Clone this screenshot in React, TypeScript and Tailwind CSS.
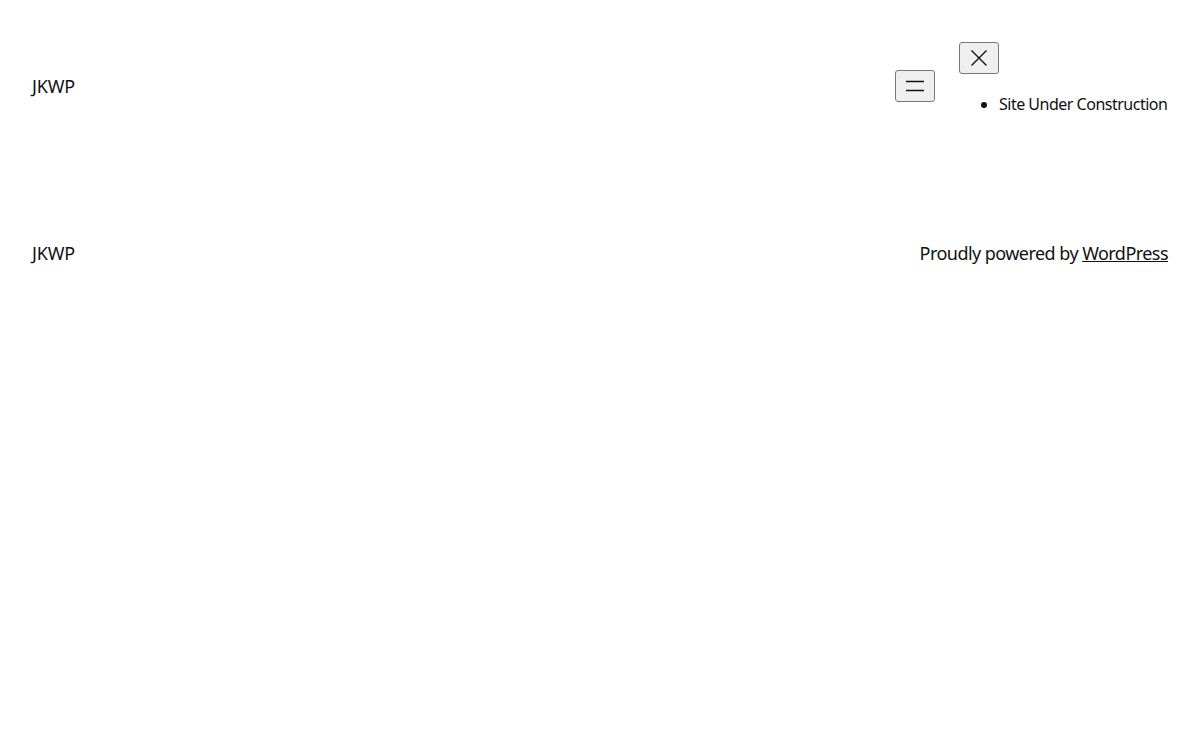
const font = { fontFamily: '"Noto Sans", "Open Sans", sans-serif' };

export default function App() {
  return (
    <div className="min-h-[740px] bg-white text-[#111]" style={font}>
      <header className="flex justify-between items-start px-8 pt-[42px]">
        <p className="text-[18px] leading-[27px] mt-[31px] tracking-[-0.2px]">JKWP</p>
        <div className="flex items-start gap-6">
          <button
            type="button"
            className="mt-[28px] w-10 h-8 flex items-center justify-center bg-[#efefef] border border-[#767676] rounded-[3px]"
          >
            <svg width="20" height="12" viewBox="0 0 20 12" fill="none" stroke="#111" strokeWidth="1.4">
              <path d="M1 1.5h18M1 10.5h18" />
            </svg>
          </button>
          <div className="w-[209px]">
            <button
              type="button"
              className="w-10 h-8 flex items-center justify-center bg-[#efefef] border border-[#767676] rounded-[3px]"
            >
              <svg width="18" height="18" viewBox="0 0 18 18" fill="none" stroke="#111" strokeWidth="1.4">
                <path d="M1.5 1.5l15 15M16.5 1.5l-15 15" />
              </svg>
            </button>
            <ul className="list-disc pl-10 mt-[18px] text-[16px] leading-6 tracking-[-0.5px] whitespace-nowrap">
              <li>Site Under Construction</li>
            </ul>
          </div>
        </div>
      </header>
      <footer className="flex justify-between items-center px-8 pt-[124px] text-[18px] leading-[27px]">
        <p className="tracking-[-0.2px]">JKWP</p>
        <p className="tracking-[-0.55px]">
          Proudly powered by{" "}
          <a href="#" className="underline">
            WordPress
          </a>
        </p>
      </footer>
    </div>
  );
}
